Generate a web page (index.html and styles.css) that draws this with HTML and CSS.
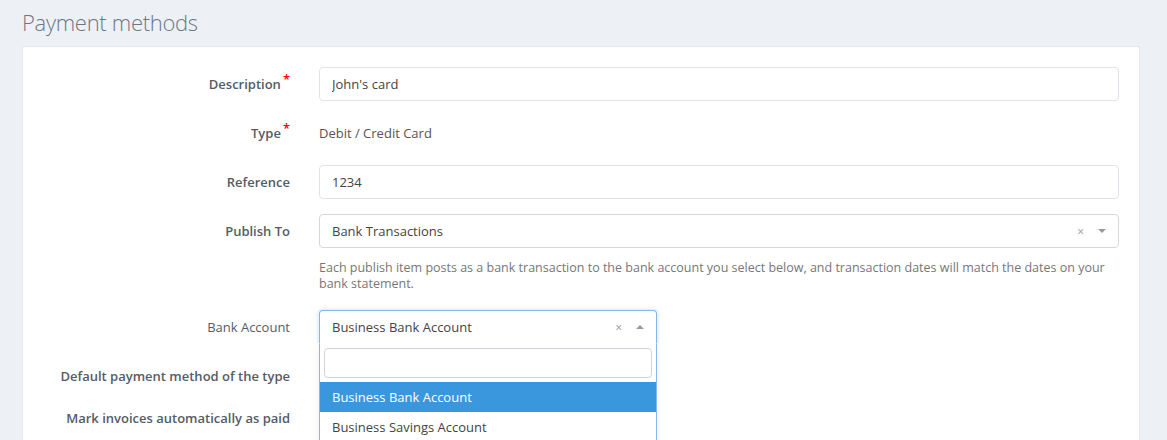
FILE: index.html
```html
<!DOCTYPE html>
<html lang="en">
<head>
    <meta charset="UTF-8">
    <meta name="viewport" content="width=device-width, initial-scale=1.0">
    <title>Payment methods</title>
    <link rel="stylesheet" href="styles.css">
</head>
<body>
    <div class="page">
        <h2 class="page-title">Payment methods</h2>
        <div class="panel">
            <div class="row">
                <label class="label" for="description">Description<span class="req">*</span></label>
                <input class="field" type="text" id="description" value="John's card">
            </div>
            <div class="row">
                <span class="label">Type<span class="req">*</span></span>
                <span class="static">Debit / Credit Card</span>
            </div>
            <div class="row">
                <label class="label" for="reference">Reference</label>
                <input class="field" type="text" id="reference" value="1234">
            </div>
            <div class="row">
                <span class="label">Publish To</span>
                <div class="select">
                    <span class="select-value">Bank Transactions</span>
                    <span class="select-clear">×</span>
                    <span class="arrow down"></span>
                </div>
            </div>
            <p class="help">Each publish item posts as a bank transaction to the bank account you select below, and transaction dates will match the dates on your bank statement.</p>
            <div class="row">
                <span class="label normal">Bank Account</span>
                <div class="select-wrap">
                    <div class="select open">
                        <span class="select-value">Business Bank Account</span>
                        <span class="select-clear">×</span>
                        <span class="arrow up"></span>
                    </div>
                    <div class="dropdown">
                        <div class="search"><input type="text"></div>
                        <ul class="options">
                            <li class="active">Business Bank Account</li>
                            <li>Business Savings Account</li>
                        </ul>
                    </div>
                </div>
            </div>
            <div class="row">
                <span class="label">Default payment method of the type</span>
            </div>
            <div class="row short">
                <span class="label">Mark invoices automatically as paid</span>
            </div>
        </div>
    </div>
</body>
</html>
```

FILE: styles.css
```css
body {
    margin: 0;
    background-color: #edf0f5;
    font-family: "Open Sans", "Noto Sans", sans-serif;
    font-size: 13px;
    color: #4a4a4a;
    overflow: hidden;
}
.page {
    padding: 0 27px 0 22px;
}
.page-title {
    margin: 0;
    height: 46px;
    line-height: 44px;
    font-size: 22px;
    font-weight: 300;
    color: #6d7784;
    letter-spacing: -0.3px;
}
.panel {
    background-color: #fff;
    border: 1px solid #e3e7ee;
    border-bottom: none;
    border-radius: 3px 3px 0 0;
    padding: 20px 20px 0 0;
    height: 380px;
}
.row {
    display: flex;
    align-items: center;
    gap: 29px;
    min-height: 34px;
    margin-bottom: 15px;
}
.row.short {
    margin-top: -7px;
}
.label {
    width: 267px;
    flex: none;
    text-align: right;
    font-weight: 600;
    color: #555c66;
}
.label.normal {
    font-weight: 400;
}
.req {
    color: #f00;
    position: relative;
    top: -5px;
    margin-left: 2px;
}
.field {
    flex: 1;
    height: 34px;
    box-sizing: border-box;
    border: 1px solid #dfe3e9;
    border-radius: 4px;
    padding: 0 12px;
    font-family: inherit;
    font-size: 13px;
    color: #444;
}
.static {
    color: #555;
}
.select {
    flex: 1;
    height: 34px;
    box-sizing: border-box;
    border: 1px solid #d4d8de;
    border-radius: 4px;
    display: flex;
    align-items: center;
    padding: 0 12px;
    color: #444;
}
.select-value {
    flex: 1;
}
.select-clear {
    color: #999;
    font-size: 12px;
    margin-right: 14px;
}
.arrow {
    width: 0;
    height: 0;
    border-left: 4px solid transparent;
    border-right: 4px solid transparent;
}
.arrow.down {
    border-top: 4px solid #999;
}
.arrow.up {
    border-bottom: 4px solid #999;
}
.help {
    margin: -3px 0 18px 296px;
    padding-right: 10px;
    font-size: 12.5px;
    line-height: 16px;
    color: #777;
}
.select-wrap {
    position: relative;
    width: 338px;
}
.select.open {
    border-color: #87b6e8;
    border-bottom-color: transparent;
    border-radius: 4px 4px 0 0;
    box-shadow: 0 0 4px rgba(82, 150, 230, 0.35);
}
.dropdown {
    position: absolute;
    top: 34px;
    left: 0;
    right: 0;
    background: #fff;
    border: 1px solid #87b6e8;
    border-top: none;
    box-shadow: 0 4px 6px rgba(0, 0, 0, 0.08);
}
.search {
    padding: 4px 4px 4px;
}
.search input {
    display: block;
    width: 100%;
    height: 30px;
    box-sizing: border-box;
    border: 1px solid #cfd4da;
    border-radius: 4px;
}
.options {
    list-style: none;
    margin: 0;
    padding: 0;
}
.options li {
    height: 30px;
    line-height: 30px;
    padding: 0 12px;
    color: #444;
}
.options li.active {
    background-color: #3a96dd;
    color: #fff;
}
```
